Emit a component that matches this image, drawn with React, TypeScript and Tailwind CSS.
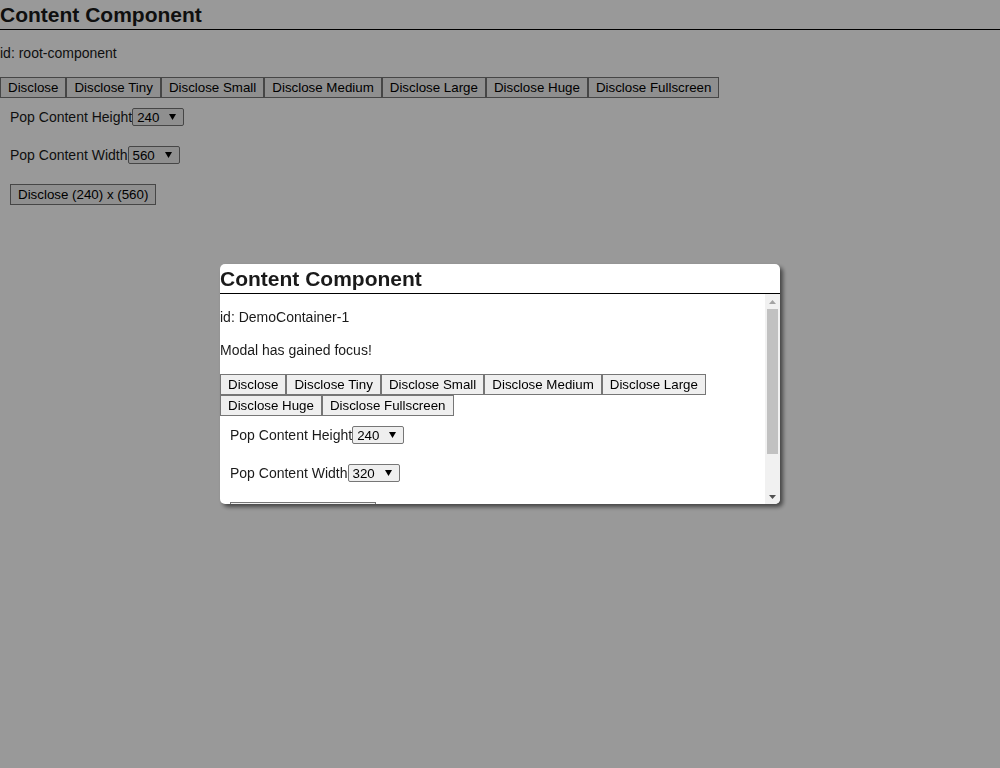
import React from 'react';

const sizes = ['Disclose', 'Disclose Tiny', 'Disclose Small', 'Disclose Medium', 'Disclose Large', 'Disclose Huge', 'Disclose Fullscreen'];

const Btn: React.FC<{ children: React.ReactNode }> = ({ children }) => (
  <button className="bg-[#efefef] border border-[#767676] px-[7px] py-[2px] text-[13.33px] leading-[15px] text-black whitespace-nowrap">
    {children}
  </button>
);

const Select: React.FC<{ value: string }> = ({ value }) => (
  <div className="w-[52px] h-[18px] border border-[#767676] rounded-[2px] bg-[#efefef] flex items-center justify-between pl-[4px] pr-[7px] text-[13.33px] leading-[15px] text-black">
    <span>{value}</span>
    <svg width="7" height="6" viewBox="0 0 7 6">
      <path d="M0 0h7L3.5 6z" fill="#000" />
    </svg>
  </div>
);

const ContentComponent: React.FC<{ id: string; width: string; focus?: boolean }> = ({ id, width, focus }) => (
  <>
    <p className="mt-[15px] leading-[16px]">id: {id}</p>
    {focus && <p className="mt-[17px] leading-[16px]">Modal has gained focus!</p>}
    <div className="mt-[16px] flex flex-wrap">
      {sizes.map((s) => (
        <Btn key={s}>{s}</Btn>
      ))}
    </div>
    <div className="p-[10px] flex items-center leading-[16px]">
      <span>Pop Content Height</span>
      <Select value="240" />
    </div>
    <div className="p-[10px] flex items-center leading-[16px]">
      <span>Pop Content Width</span>
      <Select value={width} />
    </div>
    <div className="p-[10px] flex">
      <Btn>Disclose (240) x ({width})</Btn>
    </div>
  </>
);

// classic scrollbar, scrolled to top
const Scrollbar = () => (
  <div className="w-[15px] shrink-0 bg-[#f1f1f1] flex flex-col">
    <div className="h-[15px] flex items-center justify-center">
      <svg width="7" height="4" viewBox="0 0 7 4">
        <path d="M3.5 0L7 4H0z" fill="#a3a3a3" />
      </svg>
    </div>
    <div className="flex-1 px-[2px]">
      <div className="h-[145px] bg-[#c1c1c1]" />
    </div>
    <div className="h-[15px] flex items-center justify-center">
      <svg width="7" height="4" viewBox="0 0 7 4">
        <path d="M0 0h7L3.5 4z" fill="#505050" />
      </svg>
    </div>
  </div>
);

export default function App() {
  return (
    <div className="relative min-h-screen bg-white text-[14px] text-[#1a1a1a] font-['Liberation_Sans',Arial,sans-serif]">
      <h1 className="text-[21px] font-bold leading-[24px] pt-[3px] pb-[2px] border-b border-black">Content Component</h1>
      <ContentComponent id="root-component" width="560" />

      {/* Backdrop */}
      <div className="fixed inset-0 bg-black/40" />

      {/* Modal */}
      <div className="fixed inset-0 flex items-center justify-center">
        <div className="w-[560px] h-[240px] bg-white rounded-[5px] shadow-[3px_3px_4px_rgba(0,0,0,0.55)] flex flex-col overflow-hidden">
          <h1 className="shrink-0 text-[21px] font-bold leading-[24px] pt-[3px] pb-[2px] border-b border-black">Content Component</h1>
          <div className="flex-1 min-h-0 flex">
            <div className="flex-1 overflow-hidden">
              <ContentComponent id="DemoContainer-1" width="320" focus />
            </div>
            <Scrollbar />
          </div>
        </div>
      </div>
    </div>
  );
}
